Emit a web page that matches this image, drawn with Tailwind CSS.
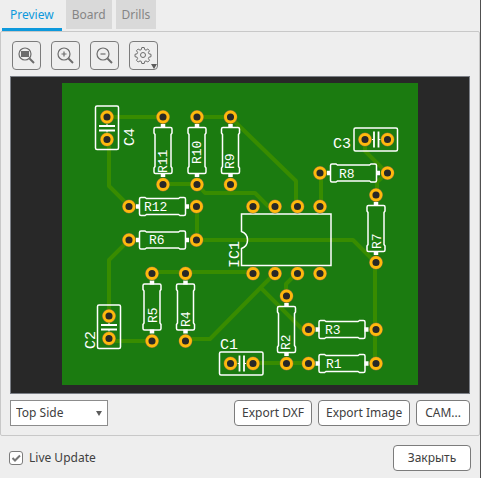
<!DOCTYPE html>
<html lang="en">
<head>
    <meta charset="UTF-8">
    <meta name="viewport" content="width=device-width, initial-scale=1.0">
    <title>Board Preview</title>
    <script src="https://cdn.jsdelivr.net/npm/@tailwindcss/browser@4"></script>
</head>
<body class="min-h-screen bg-[#eeeeee] border-r border-[#505050] font-['Noto_Sans',sans-serif] text-xs text-[#404040]">
    <!-- Tabs -->
    <div role="tablist" class="flex items-start gap-1 h-[31px] pl-0.5">
        <button role="tab" aria-selected="true" class="h-[31px] px-2 pt-px border-b-3 border-[#0d99dc] text-[#0d99dc]">Preview</button>
        <button role="tab" class="h-[29px] px-1.5 bg-[#d9d9d9] text-[#858585]">Board</button>
        <button role="tab" class="h-[29px] px-1.5 bg-[#d9d9d9] text-[#858585]">Drills</button>
    </div>

    <main class="border border-[#c8c8c8] rounded-xs p-[9px]">
        <!-- Toolbar -->
        <div class="flex gap-2.5 px-0.5 mb-1.5">
            <button aria-label="Zoom to fit" class="size-[29px] border border-[#7c7c7c] rounded">
                <svg class="size-[27px]" viewBox="0 0 27 27" fill="none" stroke="#6c6c6c">
                    <circle cx="12" cy="12" r="6" stroke-width="1.2"/>
                    <rect x="8" y="9" width="8" height="6" fill="#6c6c6c" stroke="none"/>
                    <path d="M16.5 16.5L21 21" stroke-width="2"/>
                </svg>
            </button>
            <button aria-label="Zoom in" class="size-[29px] border border-[#7c7c7c] rounded">
                <svg class="size-[27px]" viewBox="0 0 27 27" fill="none" stroke="#6c6c6c">
                    <circle cx="12" cy="12" r="6" stroke-width="1.2"/>
                    <path d="M9.500 12h5M12 9.500v5" stroke-width="1.2"/>
                    <path d="M16.5 16.5L21 21" stroke-width="2"/>
                </svg>
            </button>
            <button aria-label="Zoom out" class="size-[29px] border border-[#7c7c7c] rounded">
                <svg class="size-[27px]" viewBox="0 0 27 27" fill="none" stroke="#6c6c6c">
                    <circle cx="12" cy="12" r="6" stroke-width="1.2"/>
                    <path d="M9.500 12h5" stroke-width="1.2"/>
                    <path d="M16.5 16.5L21 21" stroke-width="2"/>
                </svg>
            </button>
            <button aria-label="Settings" class="size-[29px] border border-[#7c7c7c] rounded">
                <svg class="size-[27px]" viewBox="0 0 27 27" fill="none" stroke="#6c6c6c">
                    <circle cx="13" cy="13" r="2.5"/>
                    <path stroke-linejoin="round" d="M11.8 5.5h2.4l.5 2.1 1.3.6 1.8-1.2 1.7 1.7-1.1 1.8.5 1.3 2.1.5v2.4l-2.1.5-.5 1.3 1.1 1.8-1.7 1.7-1.8-1.1-1.3.5-.5 2.1h-2.4l-.5-2.1-1.3-.5-1.8 1.1-1.7-1.7 1.1-1.8-.5-1.3-2.1-.5v-2.4l2.1-.5.5-1.3-1.1-1.8 1.7-1.7 1.8 1.2 1.3-.6z"/>
                    <path d="M21 22h6l-3 5z" fill="#5c5c5c" stroke="none"/>
                </svg>
            </button>
        </div>

        <!-- Board preview -->
        <div class="border border-[#7b7f86] bg-[#282828]">
            <svg class="block w-full h-auto" viewBox="11 77 458 316" role="img" aria-label="Top side of the board">
                <defs>
                    <g id="pad">
                        <circle r="5.6" fill="#282828" stroke="#80703c" stroke-width="2.6"/>
                        <circle r="5" fill="#282828" stroke="#ffb90c" stroke-width="2.9"/>
                    </g>
                    <g id="res">
                        <path d="M7 0h4M56 0h4" stroke="#fff" stroke-width="4.5"/>
                        <path d="M12 -9h4l1.5 1h32l1.5 -1h4q1.5 0 1.5 1.5v15q0 1.5 -1.5 1.5h-4l-1.5 -1h-32l-1.5 1h-4q-1.5 0 -1.5 -1.5v-15q0 -1.5 1.5 -1.5z" fill="none" stroke="#fff" stroke-width="1.5"/>
                        <use href="#pad"/>
                        <use href="#pad" x="67.5"/>
                    </g>
                    <g id="cap">
                        <rect x="-11" y="-11.5" width="43.5" height="23" rx="1.5" fill="none" stroke="#fff" stroke-width="1.5"/>
                        <path d="M9 -8v16M13.5 -8v16" stroke="#fff" stroke-width="1.8"/>
                        <path d="M7 0h2M13.5 0h2" stroke="#fff"/>
                        <use href="#pad"/>
                        <use href="#pad" x="22.5"/>
                    </g>
                </defs>

                <rect x="62" y="83" width="356" height="302" fill="#1b7b10"/>

                <!-- Tracks -->
                <g fill="none" stroke="#388c00" stroke-width="4" stroke-linejoin="round">
                    <path d="M107 117h56M109 139v47l20 20M197 117h33l66 64v25"/>
                    <path d="M163 184h34l8 9h50l13 13h7"/>
                    <path d="M365 139v12l22 22l-10 9v13M321 173v33"/>
                    <path d="M197 206v34h156l22 22v101"/>
                    <path d="M129 240l-20 20v56M109 341h43M152 272h101"/>
                    <path d="M185 339h25l65-66M261 288l41 41h6M297 273l-11 11v12M253 363h55"/>
                </g>

                <!-- IC1 -->
                <path d="M241.5 214h89.5v51.5h-89.5v-17a9 9 0 0 0 0-17z" fill="none" stroke="#fff" stroke-width="1.5"/>
                <use href="#pad" x="253" y="206.5"/>
                <use href="#pad" x="275" y="206.5"/>
                <use href="#pad" x="297.5" y="206.5"/>
                <use href="#pad" x="320" y="206.5"/>
                <use href="#pad" x="253" y="273.5"/>
                <use href="#pad" x="275" y="273.5"/>
                <use href="#pad" x="297.5" y="273.5"/>
                <use href="#pad" x="320" y="273.5"/>

                <!-- Capacitors -->
                <use href="#cap" transform="translate(230.5 363.5)"/>
                <use href="#cap" transform="translate(365 139.5)"/>
                <use href="#cap" transform="translate(107 117) rotate(90)"/>
                <use href="#cap" transform="translate(109 316) rotate(90)"/>

                <!-- Resistors -->
                <use href="#res" transform="translate(163 117) rotate(90)"/>
                <use href="#res" transform="translate(197 117) rotate(90)"/>
                <use href="#res" transform="translate(230.5 117) rotate(90)"/>
                <use href="#res" transform="translate(376 195) rotate(90)"/>
                <use href="#res" transform="translate(152 273.5) rotate(90)"/>
                <use href="#res" transform="translate(185.5 273.5) rotate(90)"/>
                <use href="#res" transform="translate(286.5 296) rotate(90)"/>
                <use href="#res" transform="translate(320 173)"/>
                <use href="#res" transform="translate(129 206.5)"/>
                <use href="#res" transform="translate(129 240)"/>
                <use href="#res" transform="translate(308.5 329.5)"/>
                <use href="#res" transform="translate(308.5 363.5)"/>

                <!-- Designators -->
                <g fill="#fff" class="font-['Liberation_Mono',monospace] text-[13px]">
                    <text x="144" y="211">R12</text>
                    <text x="149" y="244">R6</text>
                    <text x="339" y="178">R8</text>
                    <text x="325" y="334">R3</text>
                    <text x="326" y="368">R1</text>
                    <text transform="translate(167 173) rotate(-90)">R11</text>
                    <text transform="translate(201 164) rotate(-90)">R10</text>
                    <text transform="translate(234 169) rotate(-90)">R9</text>
                    <text transform="translate(381 249) rotate(-90)">R7</text>
                    <text transform="translate(157 323) rotate(-90)">R5</text>
                    <text transform="translate(190 327) rotate(-90)">R4</text>
                    <text transform="translate(290 350) rotate(-90)">R2</text>
                </g>
                <g fill="#fff" class="font-['Liberation_Mono',monospace] text-[15px]">
                    <text x="220" y="349">C1</text>
                    <text x="333" y="148">C3</text>
                    <text transform="translate(134 146) rotate(-90)">C4</text>
                    <text transform="translate(95 349) rotate(-90)">C2</text>
                    <text transform="translate(239 268) rotate(-90)">IC1</text>
                </g>
            </svg>
        </div>

        <!-- Side and export -->
        <div class="flex gap-1.5 mt-1.5">
            <div class="relative mr-auto">
                <select aria-label="Side" class="appearance-none w-[98px] h-[26px] pl-[5px] pr-5 bg-white border border-[#8c8c8c]">
                    <option>Top Side</option>
                    <option>Bottom Side</option>
                </select>
                <svg class="absolute right-1.5 top-[11px] w-[6px] h-[5px] pointer-events-none" viewBox="0 0 6 5"><path d="M0 0h6L3 5z" fill="#5c5c5c"/></svg>
            </div>
            <button class="h-[26px] px-[7px] bg-white border border-[#7c7c7c] rounded">Export DXF</button>
            <button class="h-[26px] px-[7px] bg-white border border-[#7c7c7c] rounded">Export Image</button>
            <button class="h-[26px] px-2 bg-white border border-[#7c7c7c] rounded">CAM...</button>
        </div>
    </main>

    <footer class="flex items-center justify-between px-[9px] mt-[9px]">
        <label class="flex items-center gap-1.5">
            <span class="relative size-3.5">
                <input type="checkbox" checked class="peer block appearance-none size-3.5 bg-white border border-[#7c7c7c] rounded-[3px]">
                <svg class="absolute inset-0 size-3.5 hidden peer-checked:block pointer-events-none" viewBox="0 0 14 14"><path d="M3.5 7l2.500 2.500 5-5" fill="none" stroke="#777" stroke-width="2"/></svg>
            </span>
            Live Update
        </label>
        <button class="w-[78px] h-[26px] bg-white border border-[#7c7c7c] rounded">Закрыть</button>
    </footer>
</body>
</html>
